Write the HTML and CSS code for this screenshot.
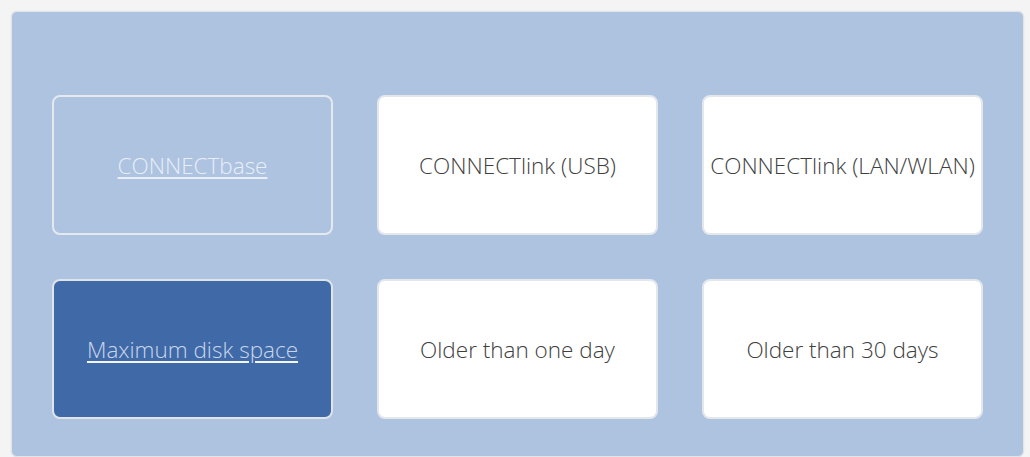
FILE: index.html
```html
<!DOCTYPE html>
<html lang="en">
  <head>
    <meta charset="UTF-8" />
    <meta name="viewport" content="width=device-width, initial-scale=1.0" />
    <link rel="stylesheet" href="styles.css">
    <title>Sources</title>
  </head>
  <body>
    <div class="panel">
      <div class="tiles">
        <a class="tile tile-ghost" href="#">CONNECTbase</a>
        <div class="tile">CONNECTlink (USB)</div>
        <div class="tile">CONNECTlink (LAN/WLAN)</div>
        <a class="tile tile-active" href="#">Maximum disk space</a>
        <div class="tile">Older than one day</div>
        <div class="tile">Older than 30 days</div>
      </div>
    </div>
  </body>
</html>
```

FILE: styles.css
```css
html,
body {
  height: 100%;
}
body {
  margin: 0;
  background: #f4f4f4;
  font-family: "Open Sans", "Liberation Sans", sans-serif;
  box-sizing: border-box;
  padding: 11px 6px 0 11px;
  overflow: hidden;
}
.panel {
  background: #aec3e0;
  border: 1px solid #e2e4e8;
  border-radius: 6px;
  height: 446px;
  box-sizing: border-box;
  padding: 83px 40px 0 40px;
  box-shadow: 0 0 2px rgba(0, 0, 0, 0.08);
}
.tiles {
  display: grid;
  grid-template-columns: repeat(3, 281px);
  grid-template-rows: 140px 140px;
  column-gap: 44px;
  row-gap: 44px;
}
.tile {
  display: flex;
  align-items: center;
  justify-content: center;
  background: #ffffff;
  border: 2px solid #e3e6eb;
  border-radius: 8px;
  color: #404040;
  font-size: 22.5px;
  font-weight: 300;
  text-decoration: none;
  box-sizing: border-box;
}
.tile-ghost {
  background: #aec3e0;
  border-color: #e4e8ef;
  color: #e8eef7;
  text-decoration: underline;
  text-underline-offset: 3px;
}
.tile-active {
  background: #406aa7;
  border-color: #dfe3ea;
  color: #c9d6ea;
  text-decoration: underline;
  text-decoration-color: #f4f6fa;
  text-underline-offset: 3px;
}
```
